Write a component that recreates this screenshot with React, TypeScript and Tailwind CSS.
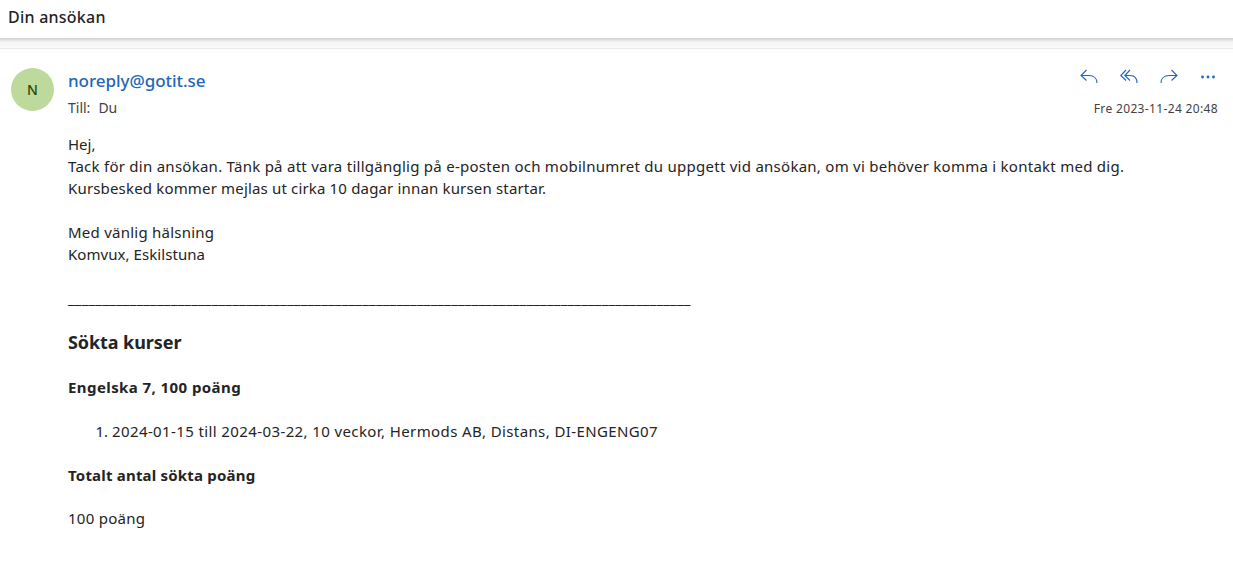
const actions = [
  { name: "Svara", paths: ["M6.5 1 1 6.5l5.5 5", "M1.5 6.5H9c5 0 8 3 8 7.5"] },
  { name: "Svara alla", paths: ["M6 1 .8 6.5 6 11.5", "M10 1 4.800 6.500l5.200 5", "M5 6.500h5c4.500 0 7 3 7 7.500"] },
  { name: "Vidarebefordra", paths: ["M11.5 1 17 6.5l-5.5 5", "M16.5 6.5H9c-5 0-8 3-8 7.5"] },
];

function Actions() {
  return (
    <div className="flex h-4 items-center gap-[22px]">
      {actions.map((action) => (
        <button key={action.name} aria-label={action.name} className="text-[#1f66c0]">
          <svg width="18" height="16" viewBox="0 0 18 16" fill="none" stroke="currentColor" strokeWidth="1.1">
            {action.paths.map((d) => (
              <path key={d} d={d} />
            ))}
          </svg>
        </button>
      ))}
      <button aria-label="Fler alternativ" className="text-[#1f66c0]">
        <svg width="18" height="16" viewBox="0 0 18 16" fill="currentColor">
          <circle cx="2.5" cy="8" r="1.4" />
          <circle cx="8" cy="8" r="1.4" />
          <circle cx="13.5" cy="8" r="1.4" />
        </svg>
      </button>
    </div>
  );
}

export default function App() {
  return (
    <div className="h-[561px] overflow-hidden bg-white font-['Noto_Sans',sans-serif] whitespace-nowrap text-[#242424]">
      <header className="flex h-[38px] items-center bg-white px-2 pb-1">
        <h1 className="text-base leading-6 font-medium tracking-[0.24px]">Din ansökan</h1>
      </header>
      <div className="h-[11px] border-b border-[#ebebeb] bg-linear-to-b from-[#cfcfcf] via-[#f5f5f5] via-40% to-[#fafafa]" />

      <main className="flex pt-[19px] pr-[15px] pl-[11px]">
        <div className="flex size-[43px] shrink-0 items-center justify-center rounded-full bg-[#bdd99b] text-sm font-medium text-[#294903]">
          N
        </div>
        <article className="ml-[14px] flex-1">
          <div className="flex h-[65px] justify-between">
            <div>
              <p className="text-[17px] leading-[26px] font-medium tracking-[-0.05px] text-[#2266b8]">
                noreply@gotit.se
              </p>
              <p className="flex gap-2 text-sm leading-[27px] text-[#424242]">
                <span>Till:</span>
                <span>Du</span>
              </p>
            </div>
            <div className="flex flex-col items-end pt-px">
              <Actions />
              <time className="mt-[14px] text-xs leading-5 tracking-[0.35px] text-[#424242]">Fre 2023-11-24 20:48</time>
            </div>
          </div>

          <div className="text-[15px] leading-[22px]">
            <p>Hej,</p>
            <p className="tracking-[0.262px]">
              Tack för din ansökan. Tänk på att vara tillgänglig på e-posten och mobilnumret du uppgett vid ansökan, om
              vi behöver komma i kontakt med dig.
            </p>
            <p className="tracking-[0.165px]">Kursbesked kommer mejlas ut cirka 10 dagar innan kursen startar.</p>
            <p className="mt-[22px] tracking-[0.24px]">Med vänlig hälsning</p>
            <p className="tracking-[0.06px]">Komvux, Eskilstuna</p>
            <p className="mt-[22px] tracking-[0.182px]">
              ___________________________________________________________________________________________
            </p>
            <h2 className="mt-[21px] text-lg leading-[24px] font-bold tracking-[-0.08px]">Sökta kurser</h2>
            <h3 className="mt-[22px] font-bold tracking-[0.42px]">Engelska 7, 100 poäng</h3>
            <ol className="mt-[22px] list-decimal pl-[44px]">
              <li>
                <span className="tracking-[0.39px]">
                  2024-01-15 till 2024-03-22, 10 veckor, Hermods AB, Distans, DI-ENGENG07
                </span>
              </li>
            </ol>
            <h3 className="mt-[22px] font-bold tracking-[0.2px]">Totalt antal sökta poäng</h3>
            <p className="mt-[21px] tracking-[0.28px]">100 poäng</p>
          </div>
        </article>
      </main>
    </div>
  );
}
